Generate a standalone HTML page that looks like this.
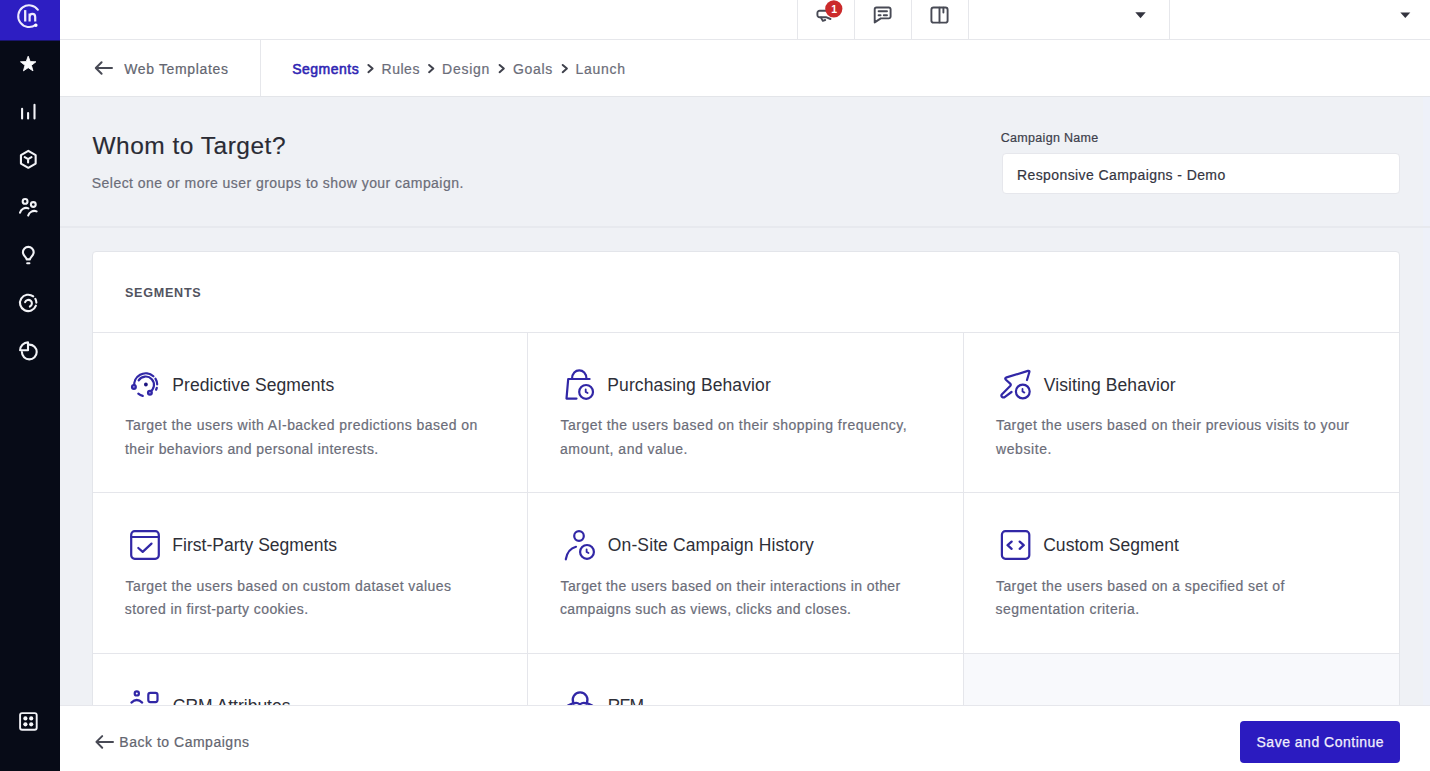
<!DOCTYPE html>
<html lang="en">
<head>
<meta charset="utf-8">
<title>Whom to Target?</title>
<style>
*{box-sizing:border-box;margin:0;padding:0}
html,body{width:1430px;height:771px;overflow:hidden;background:#eff1f5;font-family:"Liberation Sans",sans-serif;color:#2c2d36}
.abs{position:absolute}
.t{position:absolute;white-space:nowrap;line-height:1}
svg{position:absolute;left:0;top:0;overflow:visible}
#side{position:absolute;left:0;top:0;width:60px;height:771px;background:#070b17}
#logo{position:absolute;left:0;top:0;width:60px;height:41px;background:#2d1ec2;border-bottom:1px solid #1a156d}
#top{position:absolute;left:60px;top:0;width:1370px;height:40px;background:#fff;border-bottom:1px solid #e6e7eb}
.vsep{position:absolute;top:0;width:1px;height:39px;background:#e6e7eb}
#crumb{position:absolute;left:60px;top:40px;width:1370px;height:57px;background:#fff;border-bottom:1px solid #e3e5e9}
#headline{position:absolute;left:60px;top:226px;width:1370px;height:2px;background:#e7e9ee}
#card{position:absolute;left:92px;top:251px;width:1308px;height:560px;background:#fff;border:1px solid #e3e5ea;border-radius:4px 4px 0 0}
.hl{position:absolute;left:93px;width:1306px;height:1px;background:#e5e6eb}
.vl{position:absolute;width:1px;background:#e5e6eb}
#foot{position:absolute;left:60px;top:705px;width:1370px;height:66px;background:#fff;border-top:1px solid #e6e7ec}
#btn{position:absolute;left:1240px;top:721px;width:160px;height:42px;background:#2b1bc0;border-radius:4px}
.ic{fill:none;stroke:#3127a6;stroke-width:2.2;stroke-linecap:round;stroke-linejoin:round}
.si{fill:none;stroke:#f2f3f7;stroke-width:2.1;stroke-linecap:round;stroke-linejoin:round}
.ti{fill:none;stroke:#484a55;stroke-width:1.9;stroke-linecap:round;stroke-linejoin:round}
</style>
</head>
<body>
<!-- card -->
<div id="card"></div>
<div class="hl" style="top:332px"></div>
<div class="hl" style="top:492px"></div>
<div class="hl" style="top:653px"></div>
<div class="vl" style="left:527px;top:333px;height:400px"></div>
<div class="vl" style="left:963px;top:333px;height:400px"></div>
<div class="abs" style="left:964px;top:654px;width:435px;height:60px;background:#f8f9fc"></div>
<div class="t" id="seg" style="left:125.0px;top:286.6px;font-size:12.6px;color:#52545f;letter-spacing:0.721px;font-weight:bold">SEGMENTS</div>
<div class="t" id="t1" style="left:172.3px;top:376.8px;font-size:17.5px;color:#2e2f38;letter-spacing:0.083px">Predictive Segments</div>
<div class="t" id="d1_0" style="left:125.5px;top:418.4px;font-size:14px;color:#6b6d79;letter-spacing:0.458px;-webkit-text-stroke:0.2px">Target the users with AI-backed predictions based on</div>
<div class="t" id="d1_1" style="left:125.0px;top:442.3px;font-size:14px;color:#6b6d79;letter-spacing:0.417px;-webkit-text-stroke:0.2px">their behaviors and personal interests.</div>
<div class="t" id="t2" style="left:607.3px;top:376.8px;font-size:17.5px;color:#2e2f38;letter-spacing:0.108px">Purchasing Behavior</div>
<div class="t" id="d2_0" style="left:560.5px;top:418.4px;font-size:14px;color:#6b6d79;letter-spacing:0.482px;-webkit-text-stroke:0.2px">Target the users based on their shopping frequency,</div>
<div class="t" id="d2_1" style="left:560.0px;top:442.3px;font-size:14px;color:#6b6d79;letter-spacing:0.485px;-webkit-text-stroke:0.2px">amount, and value.</div>
<div class="t" id="t3" style="left:1043.7px;top:376.8px;font-size:17.5px;color:#2e2f38;letter-spacing:0.119px">Visiting Behavior</div>
<div class="t" id="d3_0" style="left:996.0px;top:418.4px;font-size:14px;color:#6b6d79;letter-spacing:0.398px;-webkit-text-stroke:0.2px">Target the users based on their previous visits to your</div>
<div class="t" id="d3_1" style="left:996.0px;top:442.3px;font-size:14px;color:#6b6d79;letter-spacing:0.593px;-webkit-text-stroke:0.2px">website.</div>
<div class="t" id="t4" style="left:172.3px;top:537.0px;font-size:17.5px;color:#2e2f38;letter-spacing:0.024px">First-Party Segments</div>
<div class="t" id="d4_0" style="left:125.5px;top:578.5px;font-size:14px;color:#6b6d79;letter-spacing:0.445px;-webkit-text-stroke:0.2px">Target the users based on custom dataset values</div>
<div class="t" id="d4_1" style="left:124.8px;top:602.4px;font-size:14px;color:#6b6d79;letter-spacing:0.417px;-webkit-text-stroke:0.2px">stored in first-party cookies.</div>
<div class="t" id="t5" style="left:607.8px;top:537.0px;font-size:17.5px;color:#2e2f38;letter-spacing:0.122px">On-Site Campaign History</div>
<div class="t" id="d5_0" style="left:560.5px;top:578.5px;font-size:14px;color:#6b6d79;letter-spacing:0.397px;-webkit-text-stroke:0.2px">Target the users based on their interactions in other</div>
<div class="t" id="d5_1" style="left:560.0px;top:602.4px;font-size:14px;color:#6b6d79;letter-spacing:0.368px;-webkit-text-stroke:0.2px">campaigns such as views, clicks and closes.</div>
<div class="t" id="t6" style="left:1043.2px;top:537.0px;font-size:17.5px;color:#2e2f38;letter-spacing:0.046px">Custom Segment</div>
<div class="t" id="d6_0" style="left:996.0px;top:578.5px;font-size:14px;color:#6b6d79;letter-spacing:0.407px;-webkit-text-stroke:0.2px">Target the users based on a specified set of</div>
<div class="t" id="d6_1" style="left:995.5px;top:602.4px;font-size:14px;color:#6b6d79;letter-spacing:0.462px;-webkit-text-stroke:0.2px">segmentation criteria.</div>
<div class="t" id="t7" style="left:172.8px;top:698.4px;font-size:17.5px;color:#2e2f38;letter-spacing:0.000px">CRM Attributes</div>
<div class="t" id="t8" style="left:607.7px;top:698.4px;font-size:17.5px;color:#2e2f38;letter-spacing:-0.800px">RFM</div>
<svg id="cardicons" width="1430" height="771" viewBox="0 0 1430 771">
<!-- predictive -->
<g class="ic">
<path d="M134.37 386.8A11.5 11.5 0 0 1 153.4 376.25"/>
<path d="M155.45 378.7A11.5 11.5 0 0 1 157.19 384.4"/>
<path d="M156.8 387.9A11.5 11.5 0 0 1 156.1 389.7"/>
<path d="M142.72 395.9A11.5 11.5 0 0 1 138.3 393.6"/>
<path d="M138.66 380.4A8.3 8.3 0 1 1 149.6 392.13"/>
<circle cx="133.9" cy="386.9" r="1.9" fill="#a9a3f3"/>
<circle cx="149.9" cy="392.8" r="1.9" fill="#a9a3f3"/>
<circle cx="145.9" cy="384.5" r="1.2" fill="#1d1580" stroke="#1d1580" stroke-width="1.4"/>
</g>
<!-- purchasing -->
<g class="ic">
<path d="M576.5 398.6H566.5L568.2 379H589.6"/>
<path d="M572 379C572 367.6 586.5 367.6 586.5 379"/>
<circle cx="586.1" cy="391.9" r="6.9"/>
<path d="M585.7 389.3V391.9L587.6 393" stroke-width="1.8"/>
</g>
<!-- visiting -->
<g class="ic">
<path d="M1027 380L1029.3 372.3Q1029.9 370.3 1027.9 370.9L1006.6 377.4Q1004.3 378.1 1005.9 379.8L1010.2 383.6Q1011.3 384.7 1010.2 385.9L1002 394.2Q1000.6 395.8 1002.2 397Q1003.6 397.9 1005 396.8L1011.5 392"/>
<circle cx="1022.8" cy="391.5" r="6.9"/>
<path d="M1022.5 388.9V391.5L1024.4 392.6" stroke-width="1.8"/>
</g>
<!-- first-party -->
<g class="ic">
<rect x="131.2" y="531.2" width="27.6" height="27.6" rx="3.5"/>
<path d="M131.2 537H158.8"/>
<path d="M138.3 548L142.7 551.9L151.5 543.6"/>
</g>
<!-- on-site -->
<g class="ic">
<circle cx="579" cy="536" r="4.8"/>
<path d="M565.8 559.3C567 552.5 570.5 548.2 576 546.8"/>
<circle cx="587" cy="551.9" r="6.9"/>
<path d="M586.6 549.3V551.9L588.5 553" stroke-width="1.8"/>
</g>
<!-- custom -->
<g class="ic">
<rect x="1001.9" y="531.2" width="27.4" height="27.6" rx="3.5"/>
<path d="M1011.6 541.6L1007.6 545.2L1011.6 548.8M1019.7 541.6L1023.7 545.2L1019.7 548.8" stroke-width="2.3"/>
</g>
<!-- crm -->
<g class="ic" stroke-width="2">
<circle cx="136.8" cy="693.4" r="2.1"/>
<path d="M131.4 702.6Q136.8 697.4 142.2 702.6"/>
<rect x="148.3" y="692.9" width="9.2" height="9.2" rx="2"/>
</g>
<!-- rfm -->
<g class="ic" stroke-width="2">
<path d="M573.4 703A7.4 7.4 0 1 1 586.8 703"/>
<path d="M573.4 703L568 705.6M586.8 703L592.2 705.6"/>
<path d="M573.4 703.7Q576.5 701.8 579.9 704.3Q583.3 701.6 586.8 703.7"/>
</g>
</svg>

<div class="abs" style="left:1423px;top:97px;width:7px;height:608px;background:#eef1f9"></div>
<!-- header -->
<div id="headline"></div>
<div class="t" id="h1" style="left:92.5px;top:134.2px;font-size:24.5px;color:#2a2b34;letter-spacing:0.493px;-webkit-text-stroke:0.15px">Whom to Target?</div>
<div class="t" id="sub" style="left:91.8px;top:175.5px;font-size:14px;color:#6b6d79;letter-spacing:0.455px;-webkit-text-stroke:0.2px">Select one or more user groups to show your campaign.</div>
<div class="t" id="cn" style="left:1000.8px;top:132.0px;font-size:12.5px;color:#3d3f4b;letter-spacing:0.296px;-webkit-text-stroke:0.2px">Campaign Name</div>
<div class="abs" id="inp" style="left:1002px;top:153px;width:398px;height:41px;background:#fff;border:1px solid #e6e7ec;border-radius:4px"></div>
<div class="t" id="inpt" style="left:1017.0px;top:167.6px;font-size:14px;color:#34353f;letter-spacing:0.406px;-webkit-text-stroke:0.2px">Responsive Campaigns - Demo</div>

<!-- breadcrumb bar -->
<div id="crumb"></div>
<div class="vl" style="left:260px;top:40px;height:56px;background:#e6e7eb"></div>
<div class="t" id="wt" style="left:124.2px;top:61.6px;font-size:14px;color:#63656f;letter-spacing:0.650px;-webkit-text-stroke:0.2px">Web Templates</div>
<div class="t" id="c1" style="left:292.2px;top:61.6px;font-size:14px;color:#2f25b3;letter-spacing:0.493px;-webkit-text-stroke:0.55px">Segments</div>
<div class="t" id="c2" style="left:381.6px;top:61.6px;font-size:14px;color:#6b6d79;letter-spacing:0.500px;-webkit-text-stroke:0.2px">Rules</div>
<div class="t" id="c3" style="left:442.1px;top:61.6px;font-size:14px;color:#6b6d79;letter-spacing:0.740px;-webkit-text-stroke:0.2px">Design</div>
<div class="t" id="c4" style="left:513.0px;top:61.6px;font-size:14px;color:#6b6d79;letter-spacing:0.688px;-webkit-text-stroke:0.2px">Goals</div>
<div class="t" id="c5" style="left:575.5px;top:61.6px;font-size:14px;color:#6b6d79;letter-spacing:0.730px;-webkit-text-stroke:0.2px">Launch</div>
<svg id="crumbicons" width="1430" height="771" viewBox="0 0 1430 771">
<path d="M112 68H96.2M101.6 62.2L95.8 68L101.6 73.8" fill="none" stroke="#484a55" stroke-width="2" stroke-linecap="round" stroke-linejoin="round"/>
<g fill="none" stroke="#3f414c" stroke-width="2" stroke-linecap="round" stroke-linejoin="round">
<path d="M368.4 65L372.6 68.6L368.4 72.2"/>
<path d="M429.1 65L433.3 68.6L429.1 72.2"/>
<path d="M499.6 65L503.8 68.6L499.6 72.2"/>
<path d="M562.7 65L566.9 68.6L562.7 72.2"/>
</g>
</svg>

<!-- top bar -->
<div id="top"></div>
<div class="vsep" style="left:797px"></div>
<div class="vsep" style="left:854px"></div>
<div class="vsep" style="left:911px"></div>
<div class="vsep" style="left:968px"></div>
<div class="vsep" style="left:1169px"></div>
<svg id="topicons" width="1430" height="771" viewBox="0 0 1430 771">
<g class="ti" stroke="#3c3e4a" stroke-width="2">
<path d="M830 10.8H819.6A2.2 2.2 0 0 0 817.4 13V15A2.2 2.2 0 0 0 819.6 17.2H826L830.5 19"/>
<path d="M821 17.6L822.8 20.9L825.2 20"/>
</g>
<circle cx="833.8" cy="8.8" r="8.6" fill="#cb2a2b"/>
<text x="834.2" y="12.7" style="font-family:'Liberation Sans',sans-serif" font-size="10.5" font-weight="bold" fill="#fff" text-anchor="middle">1</text>
<g class="ti">
<path d="M876.5 7.5H888.8A1.8 1.8 0 0 1 890.6 9.3V16.6A1.8 1.8 0 0 1 888.8 18.4H880.8L874.7 22.4V9.3A1.8 1.8 0 0 1 876.5 7.5Z"/>
<path d="M878.6 11.2H887M878.6 15.3H880.6M883.8 15.3H887"/>
</g>
<g class="ti" stroke-width="2">
<rect x="931.4" y="7.5" width="16.2" height="15.1" rx="2.2"/>
<path d="M939.5 7.8V22.4M943.4 7.8V12.6"/>
</g>
<path d="M1135.3 12.3H1145.7L1140.5 18.2Z" fill="#33343f"/>
<path d="M1400.3 12.5H1410.3L1405.3 18Z" fill="#33343f"/>
</svg>

<!-- footer -->
<div id="foot"></div>
<div id="btn"></div>
<div class="t" id="bk" style="left:119.3px;top:735.2px;font-size:14px;color:#63656f;letter-spacing:0.516px;-webkit-text-stroke:0.2px">Back to Campaigns</div>
<div class="t" id="bt" style="left:1256.5px;top:734.9px;font-size:14px;color:#f1effd;letter-spacing:0.503px;-webkit-text-stroke:0.25px">Save and Continue</div>
<svg id="footicons" width="1430" height="771" viewBox="0 0 1430 771">
<path d="M113 741.9H96.8M102.2 736.1L96.4 741.9L102.2 747.7" fill="none" stroke="#484a55" stroke-width="2" stroke-linecap="round" stroke-linejoin="round"/>
</svg>

<!-- sidebar -->
<div id="side"><div id="logo"></div>
<svg id="sideicons" width="60" height="771" viewBox="0 0 60 771">
<!-- logo -->
<g fill="none" stroke="#eeeafd" stroke-linecap="round" stroke-linejoin="round">
<path d="M37.92 9.79A10.9 10.9 0 1 0 35.66 24.91" stroke-width="2"/>
<circle cx="35.9" cy="25.2" r="1" fill="#fff" stroke-width="1.4" stroke="#fff"/>
<path d="M25.2 10.1V21.5" stroke-width="2.3" stroke-linecap="butt"/>
<path d="M29.6 21.5V13.4M29.6 17C29.6 12.8 35.2 12.8 35.2 17V21.5" stroke-width="2.2" stroke-linecap="butt"/>
</g>
<!-- star -->
<path d="M28.20 56.20L30.17 61.59L35.90 61.80L31.39 65.34L32.96 70.85L28.20 67.65L23.44 70.85L25.01 65.34L20.50 61.80L26.23 61.59Z" fill="#fafbfd" stroke="#fafbfd" stroke-width="0.9" stroke-linejoin="round"/>
<!-- bars -->
<path class="si" d="M22.1 108.7V118.4M28.1 113.1V118.4M34.5 104.8V118.4" stroke-width="2.3"/>
<!-- hex -->
<path class="si" d="M28.3 150.8L35.66 155.05V163.55L28.3 167.8L20.94 163.55V155.05Z"/>
<path class="si" d="M24.7 157.2L28.1 159.2L31.5 157.2M28.1 159.2V162.5"/>
<!-- people -->
<g class="si">
<circle cx="25.1" cy="201.4" r="2.4"/>
<circle cx="33.3" cy="204.5" r="2.4"/>
<path d="M20 212.7A6.2 6.2 0 0 1 28.4 208.4"/>
<path d="M28.2 215.6A6.2 6.2 0 0 1 36.6 211.4"/>
</g>
<!-- bulb -->
<g class="si">
<path d="M26.7 259.4C26.7 257.6 22.9 255.6 22.9 252.3A5.4 5.4 0 0 1 33.7 252.3C33.7 255.6 29.9 257.6 29.9 259.4Z"/>
<path d="M27.2 263.2H29.4"/>
</g>
<!-- spiral -->
<g class="si">
<path d="M33.25 296.44A8.2 8.2 0 1 0 35.9 305.7"/>
<path d="M35.3 298.8A8.2 8.2 0 0 1 36.39 302.6"/>
<path d="M25.11 302.2A3.5 3.5 0 1 1 29.88 306.57"/>
</g>
<!-- pie -->
<g class="si">
<path d="M29.3 344.6A7.4 7.4 0 1 1 21.9 352"/>
<path d="M28 350.3V342.4A7.9 7.9 0 0 0 20.1 350.3Z"/>
</g>
<!-- grid -->
<rect x="20.1" y="713.1" width="16.6" height="16.6" rx="2" fill="none" stroke="#f2f3f7" stroke-width="1.9"/>
<g fill="#f6f7fa"><circle cx="25.4" cy="718.4" r="2.1"/><circle cx="31.2" cy="718.4" r="2.1"/><circle cx="25.4" cy="724.3" r="2.1"/><circle cx="31.2" cy="724.3" r="2.1"/></g>
</svg>
</div>
</body>
</html>
